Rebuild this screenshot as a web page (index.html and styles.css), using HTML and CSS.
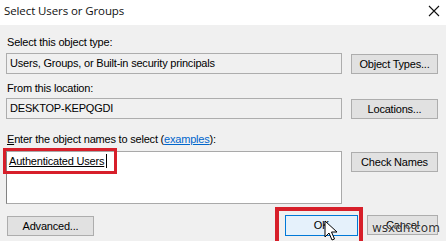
FILE: index.html
```html
<!DOCTYPE html>
<html>
<head>
<meta charset="utf-8">
<link rel="stylesheet" href="styles.css">
</head>
<body>
<div class="dialog">
  <div class="titlebar">
    <span class="title">Select Users or Groups</span>
    <svg class="close" width="12" height="12" viewBox="0 0 12 12"><path d="M1 1 L11 11 M11 1 L1 11" stroke="#111" stroke-width="1.1" fill="none"/></svg>
  </div>
  <div class="content">
    <div class="label l1">Select this object type:</div>
    <div class="row r1">
      <div class="field">Users, Groups, or Built-in security principals</div>
      <div class="btn">Object Types...</div>
    </div>
    <div class="label l2">From this location:</div>
    <div class="row r2">
      <div class="field">DESKTOP-KEPQGDI</div>
      <div class="btn">Locations...</div>
    </div>
    <div class="label l3"><u>E</u>nter the object names to select (<a class="link">examples</a>):</div>
    <div class="row r3">
      <div class="area">
        <span class="entry"><u>Authenticated Users</u><span class="caret"></span></span>
        <div class="hl hl1"></div>
      </div>
      <div class="btn">Check Names</div>
    </div>
    <div class="row r4">
      <div class="btn adv">Advanced...</div>
      <div class="right-btns">
        <div class="okwrap">
          <div class="btn ok">OK</div>
          <div class="hl hl2"></div>
        </div>
        <div class="btn cancel">Cancel</div>
      </div>
    </div>
  </div>
  <svg class="pointer" width="14" height="22" viewBox="0 0 14 22"><path d="M1 1 L1 17 L5 13 L8 20 L10.5 19 L7.5 12 L13 12 Z" fill="#fff" stroke="#000" stroke-width="1"/></svg>
  <div class="watermark">wsxdn.com</div>
</div>
</body>
</html>
```
FILE: styles.css
```css
html, body {
  margin: 0;
  padding: 0;
  background: #f0f0f0;
}
.dialog {
  position: relative;
  width: 446px;
  height: 241px;
  overflow: hidden;
  font-family: "Liberation Sans", Arial, sans-serif;
  font-size: 11px;
  letter-spacing: -0.2px;
  color: #000;
  background: #f0f0f0;
}
.titlebar {
  height: 25px;
  background: #fff;
  display: flex;
  align-items: center;
  justify-content: space-between;
  padding: 0 6px 4px 4px;
  box-sizing: border-box;
}
.title {
  font-family: "Open Sans", "Liberation Sans", sans-serif;
  font-size: 11.5px;
  letter-spacing: -0.1px;
  color: #111;
}
.content {
  padding: 0 8px 0 6px;
}
.label {
  height: 14px;
  line-height: 14px;
  padding-left: 1px;
}
.l1 { margin-top: 10px; }
.l2 { margin-top: 7px; }
.l3 { margin-top: 13px; }
.row {
  display: flex;
  justify-content: space-between;
  align-items: flex-start;
}
.r1 { margin-top: 4px; }
.r2 { margin-top: 3px; }
.r3 { margin-top: 5px; }
.r4 { margin-top: 11px; }
.field {
  width: 336px;
  height: 21px;
  box-sizing: border-box;
  border: 1px solid #adadad;
  background: #f0f0f0;
  line-height: 19px;
  padding-left: 3px;
}
.btn {
  width: 87px;
  height: 20px;
  box-sizing: border-box;
  border: 1px solid #adadad;
  background: #e1e1e1;
  text-align: center;
  line-height: 18px;
  margin-top: 1px;
}
.area {
  position: relative;
  width: 336px;
  height: 53px;
  box-sizing: border-box;
  border: 1px solid #a9a9a9;
  border-left-color: #828282;
  background: #fff;
  padding: 2px 0 0 2px;
}
.entry {
  display: inline-flex;
  align-items: center;
  line-height: 14px;
}
.caret {
  display: inline-block;
  width: 1px;
  height: 14px;
  background: #000;
  margin-left: 2px;
}
.link {
  color: #0066cc;
  text-decoration: underline;
}
.hl {
  position: absolute;
  border: 3px solid #d71f2a;
  box-sizing: border-box;
}
.hl1 {
  left: -4px;
  top: -4px;
  width: 114px;
  height: 26px;
}
.adv {
  margin-left: 1px;
  width: 87px;
}
.right-btns {
  display: flex;
  align-items: flex-start;
  gap: 9px;
}
.okwrap {
  position: relative;
}
.ok {
  width: 73px;
  height: 21px;
  background: #e5f1fb;
  border-color: #0078d7;
  margin-top: 0;
}
.cancel {
  width: 71px;
  margin-top: 0;
}
.hl2 {
  border-width: 4px;
  left: -10px;
  top: -8px;
  width: 88px;
  height: 40px;
}
.pointer {
  position: absolute;
  left: 324px;
  top: 220px;
}
.watermark {
  position: absolute;
  left: 372px;
  top: 221px;
  font-family: "DejaVu Sans", sans-serif;
  font-size: 12px;
  letter-spacing: 0;
  color: #333;
  text-shadow: 0 0 2px #fff;
}
```
